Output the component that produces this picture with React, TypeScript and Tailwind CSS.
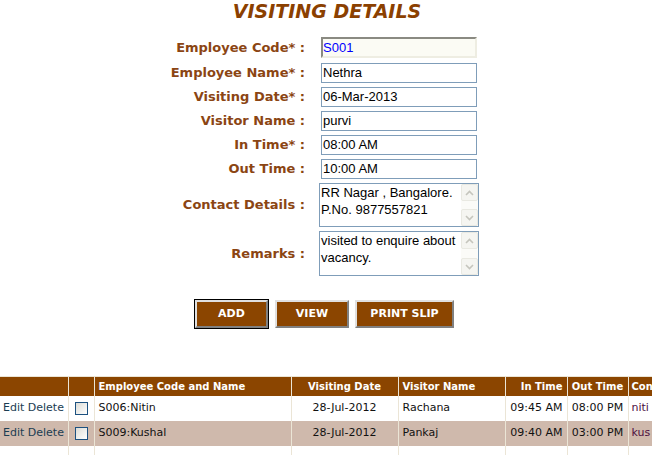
import React from "react";

const labelCls =
  "w-[305px] shrink-0 text-right font-['DejaVu_Sans',sans-serif] font-bold text-[13px] leading-[16px] text-[#8b4513]";

function TextRow({ label, value, className = "" }: { label: string; value: string; className?: string }) {
  return (
    <div className={`flex items-center h-[20px] ${className}`}>
      <div className={labelCls}>{label}</div>
      <div className="ml-[16px] w-[156px] h-[20px] border border-[#7f9db9] bg-white flex items-center pl-[1px] font-['Liberation_Sans',Arial,sans-serif] text-[13px] text-black">
        {value}
      </div>
    </div>
  );
}

function Chevron({ up }: { up: boolean }) {
  return (
    <svg width="9" height="6" viewBox="0 0 9 6">
      <path
        d={up ? "M1 5 L4.5 1.5 L8 5" : "M1 1 L4.5 4.5 L8 1"}
        fill="none"
        stroke="#c5c5bd"
        strokeWidth="1.6"
      />
    </svg>
  );
}

function Area({ label, lines, className = "", h }: { label: string; lines: string[]; className?: string; h: string }) {
  return (
    <div className={`flex items-center ${className}`}>
      <div className={labelCls}>{label}</div>
      <div className={`ml-[14px] w-[160px] ${h} border border-[#7f9db9] bg-white flex`}>
        <div className="flex-1 pl-[1px] font-['Liberation_Sans',Arial,sans-serif] text-[13px] leading-[17px] text-black">
          {lines.map((l) => (
            <div key={l}>{l}</div>
          ))}
        </div>
        <div className="w-[17px] flex flex-col justify-between bg-[#fbfbf8]">
          <div className="h-[17px] border border-[#e9e9e2] bg-[#f5f5f1] rounded-[2px] flex items-center justify-center">
            <Chevron up />
          </div>
          <div className="h-[17px] border border-[#e9e9e2] bg-[#f5f5f1] rounded-[2px] flex items-center justify-center">
            <Chevron up={false} />
          </div>
        </div>
      </div>
    </div>
  );
}

const btnCls =
  "h-[28px] bg-[#8b4500] border-2 border-t-[#e0e0e0] border-l-[#e0e0e0] border-b-[#808080] border-r-[#808080] text-white font-['DejaVu_Sans',sans-serif] font-bold text-[11px] flex items-center justify-center";

const rows = [
  { code: "S006:Nitin", date: "28-Jul-2012", visitor: "Rachana", inT: "09:45 AM", outT: "08:00 PM", c: "niti", bg: "bg-white" },
  { code: "S009:Kushal", date: "28-Jul-2012", visitor: "Pankaj", inT: "09:40 AM", outT: "03:00 PM", c: "kus", bg: "bg-[#cfb9ac]" },
];

const bd = "border-r border-[#ebe5d6]";

export default function App() {
  return (
    <div className="w-[652px] h-[455px] overflow-hidden bg-white">
      <h1 className="text-center font-['DejaVu_Sans',sans-serif] font-bold italic text-[19px] leading-[22px] text-[#8b4000] pl-[2px]">
        VISITING DETAILS
      </h1>

      <div className="flex flex-col mt-[15px]">
        <div className="flex items-center h-[21px]">
          <div className={labelCls}>Employee Code* :</div>
          <div className="ml-[16px] w-[156px] h-[21px] border-2 border-t-[#8a8a82] border-l-[#8a8a82] border-b-[#eeede2] border-r-[#eeede2] bg-[#fbfbf4] flex items-center font-['Liberation_Sans',Arial,sans-serif] text-[13px] text-[#0000ff]">
            S001
          </div>
        </div>
        <TextRow label="Employee Name* :" value="Nethra" className="mt-[5px]" />
        <TextRow label="Visiting Date* :" value="06-Mar-2013" className="mt-[4px]" />
        <TextRow label="Visitor Name :" value="purvi" className="mt-[4px]" />
        <TextRow label="In Time* :" value="08:00 AM" className="mt-[4px]" />
        <TextRow label="Out Time :" value="10:00 AM" className="mt-[4px]" />
        <Area label="Contact Details :" lines={["RR Nagar , Bangalore.", "P.No. 9877557821"]} className="mt-[4px]" h="h-[44px]" />
        <Area label="Remarks :" lines={["visited to enquire about", "vacancy."]} className="mt-[4px]" h="h-[45px]" />
      </div>

      <div className="flex items-center ml-[194px] mt-[23px] gap-[6px]">
        <div className="border border-black">
          <div className={`${btnCls} w-[73px]`}>ADD</div>
        </div>
        <div className={`${btnCls} w-[74px]`}>VIEW</div>
        <div className={`${btnCls} w-[99px]`}>PRINT SLIP</div>
      </div>

      <table className="mt-[47px] border-collapse table-fixed w-[760px] border-t border-[#ebe5d6] font-['DejaVu_Sans',sans-serif] text-[11px]">
        <colgroup>
          <col className="w-[68px]" />
          <col className="w-[26px]" />
          <col className="w-[197px]" />
          <col className="w-[107px]" />
          <col className="w-[107px]" />
          <col className="w-[62px]" />
          <col className="w-[61px]" />
          <col className="w-[132px]" />
        </colgroup>
        <thead>
          <tr className="h-[19px] bg-[#8b4500] text-white font-bold text-[10px]">
            <th className={bd}></th>
            <th className={bd}></th>
            <th className={`${bd} text-left pl-[4px] font-bold`}>Employee Code and Name</th>
            <th className={`${bd} text-center font-bold`}>Visiting Date</th>
            <th className={`${bd} text-left pl-[4px] font-bold`}>Visitor Name</th>
            <th className={`${bd} text-right pr-[4px] font-bold`}>In Time</th>
            <th className={`${bd} text-center font-bold`}>Out Time</th>
            <th className="text-left pl-[3px] font-bold whitespace-nowrap overflow-hidden">Contact Details</th>
          </tr>
        </thead>
        <tbody>
          {rows.map((r) => (
            <tr key={r.code} className={`h-[25px] ${r.bg}`}>
              <td className={`${bd} pl-[3px] text-[#1b3d52] whitespace-nowrap`}>Edit Delete</td>
              <td className={bd}>
                <div className="mx-auto w-[13px] h-[13px] border border-[#1c5180] bg-gradient-to-br from-[#dcdcd6] to-white" />
              </td>
              <td className={`${bd} pl-[4px] text-[#111]`}>{r.code}</td>
              <td className={`${bd} text-center text-[#111]`}>{r.date}</td>
              <td className={`${bd} pl-[4px] text-[#111]`}>{r.visitor}</td>
              <td className={`${bd} text-right pr-[4px] text-[#111]`}>{r.inT}</td>
              <td className={`${bd} text-center text-[#111]`}>{r.outT}</td>
              <td className="pl-[3px] text-[#4d0f3f]">{r.c}</td>
            </tr>
          ))}
          <tr className="h-[25px] bg-white">
            <td className={bd}></td>
            <td className={bd}></td>
            <td className={bd}></td>
            <td className={bd}></td>
            <td className={bd}></td>
            <td className={bd}></td>
            <td className={bd}></td>
            <td></td>
          </tr>
        </tbody>
      </table>
    </div>
  );
}
